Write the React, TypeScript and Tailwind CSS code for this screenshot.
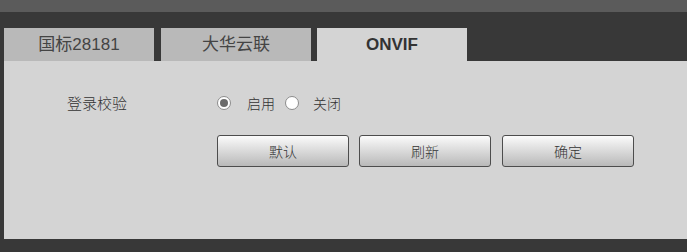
function Tab({ label, active }: { label: string; active?: boolean }) {
  return (
    <div
      className={
        active
          ? "w-[150px] h-[33px] flex items-center justify-center bg-[#d4d4d4] text-[#333] text-[17px] font-bold font-['Liberation_Sans',sans-serif]"
          : "w-[150px] h-[33px] flex items-center justify-center bg-[#b9b9b9] text-[#444] text-[17px] font-['Liberation_Sans','Noto_Sans_CJK_SC',sans-serif]"
      }
    >
      {label}
    </div>
  );
}

function Radio({ checked }: { checked?: boolean }) {
  return (
    <span className="w-[14px] h-[14px] rounded-full border border-[#8c8c8c] bg-white flex items-center justify-center">
      {checked && <span className="w-[8px] h-[8px] rounded-full bg-[#6b6b6b]" />}
    </span>
  );
}

function Button({ label }: { label: string }) {
  return (
    <button className="w-[132px] h-[32px] rounded-[3px] border border-[#4d4d4d] bg-gradient-to-b from-[#fbfbfb] to-[#b9b9b9] text-[14px] text-[#333] font-['Noto_Sans_CJK_SC',sans-serif]">
      {label}
    </button>
  );
}

export default function App() {
  return (
    <div className="w-[687px] h-[252px] bg-[#383838] flex flex-col overflow-hidden">
      <div className="h-[12px] bg-[#5b5b5b]" />

      {/* tabs */}
      <div className="flex pt-[16px] pl-[4px]">
        <Tab label="国标28181" />
        <div className="w-[7px]" />
        <Tab label="大华云联" />
        <div className="w-[6px]" />
        <Tab label="ONVIF" active />
      </div>

      {/* panel */}
      <div className="ml-[4px] h-[178px] bg-[#d4d4d4] pt-[32px] pl-[63px] text-[14px] text-[#333] font-['Noto_Sans_CJK_SC',sans-serif] font-light">
        <div className="flex items-center h-[20px]">
          <span className="w-[150px] text-[15px]">登录校验</span>
          <Radio checked />
          <span className="ml-[16px]">启用</span>
          <span className="ml-[10px]">
            <Radio />
          </span>
          <span className="ml-[14px]">关闭</span>
        </div>
        <div className="flex ml-[150px] mt-[22px]">
          <Button label="默认" />
          <div className="w-[10px]" />
          <Button label="刷新" />
          <div className="w-[11px]" />
          <Button label="确定" />
        </div>
      </div>
    </div>
  );
}
